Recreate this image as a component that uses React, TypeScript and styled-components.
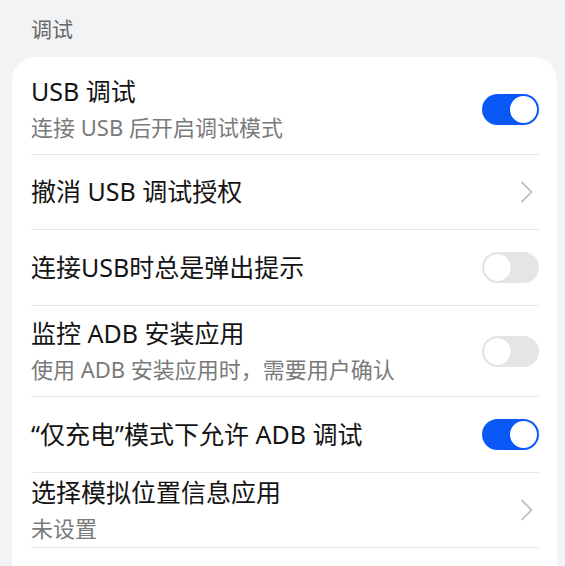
import React from "react";
import styled, { createGlobalStyle } from "styled-components";

const Global = createGlobalStyle`
  html, body { margin: 0; padding: 0; background: #f1f3f5; }
  body { font-family: "Noto Sans", "Noto Sans CJK SC", sans-serif; }
`;

const Page = styled.div`
  width: 565px;
  height: 566px;
  overflow: hidden;
  background: #f1f3f5;
  padding: 0 8px 0 12px;
  box-sizing: border-box;
`;

const SectionTitle = styled.div`
  padding: 13px 0 0 19px;
  height: 57px;
  box-sizing: border-box;
  font-size: 21px;
  line-height: 30px;
  color: #666666;
  font-family: "Noto Sans CJK SC", sans-serif;
`;

const Card = styled.div`
  background: #ffffff;
  border-radius: 24px;
  padding: 7px 18px 40px 19px;
`;

const Row = styled.div<{ $h: number }>`
  display: flex;
  align-items: center;
  justify-content: space-between;
  min-height: ${(p) => p.$h}px;
  box-sizing: border-box;
  border-bottom: 1px solid #e6e6e6;
`;

const Texts = styled.div`
  display: flex;
  flex-direction: column;
  margin-top: -2px;
`;

const Title = styled.div`
  font-family: "Noto Sans", "Noto Sans CJK SC", sans-serif;
  font-size: 25px;
  line-height: 32px;
  color: #141414;
`;

const Sub = styled.div`
  font-family: "Noto Sans", "Noto Sans CJK SC", sans-serif;
  font-size: 22px;
  line-height: 28px;
  margin-top: 6px;
  color: #7a7a7a;
`;

const Track = styled.div<{ $on: boolean }>`
  width: 57px;
  height: 31px;
  border-radius: 16px;
  background: ${(p) => (p.$on ? "#0a59f7" : "#e5e5e5")};
  position: relative;
  flex-shrink: 0;
`;

const Knob = styled.div<{ $on: boolean }>`
  position: absolute;
  top: 2px;
  left: ${(p) => (p.$on ? "28px" : "2px")};
  width: 27px;
  height: 27px;
  border-radius: 50%;
  background: #ffffff;
  box-shadow: ${(p) => (p.$on ? "none" : "0 0 1px rgba(0,0,0,0.12)")};
`;

const ChevronBox = styled.div`
  width: 16px;
  display: flex;
  justify-content: flex-start;
  margin-right: 3px;
  flex-shrink: 0;
`;

const Toggle = ({ on }: { on: boolean }) => (
  <Track $on={on}>
    <Knob $on={on} />
  </Track>
);

const Chevron = () => (
  <ChevronBox>
    <svg width="14" height="22" viewBox="0 0 14 22">
      <path d="M2 1.5 L11.5 11 L2 20.5" fill="none" stroke="#c2c2c2" strokeWidth="1.8" strokeLinecap="round" strokeLinejoin="round" />
    </svg>
  </ChevronBox>
);

type Item = {
  title: string;
  sub?: string;
  h: number;
  right: "on" | "off" | "chev";
};

const items: Item[] = [
  { title: "USB 调试", sub: "连接 USB 后开启调试模式", h: 91, right: "on" },
  { title: "撤消 USB 调试授权", h: 75, right: "chev" },
  { title: "连接USB时总是弹出提示", h: 76, right: "off" },
  { title: "监控 ADB 安装应用", sub: "使用 ADB 安装应用时，需要用户确认", h: 91, right: "off" },
  { title: "“仅充电”模式下允许 ADB 调试", h: 76, right: "on" },
  { title: "选择模拟位置信息应用", sub: "未设置", h: 75, right: "chev" },
];

export default function App() {
  return (
    <Page>
      <Global />
      <SectionTitle>调试</SectionTitle>
      <Card>
        {items.map((it) => (
          <Row key={it.title} $h={it.h}>
            <Texts>
              <Title>{it.title}</Title>
              {it.sub && <Sub>{it.sub}</Sub>}
            </Texts>
            {it.right === "chev" ? <Chevron /> : <Toggle on={it.right === "on"} />}
          </Row>
        ))}
      </Card>
    </Page>
  );
}
